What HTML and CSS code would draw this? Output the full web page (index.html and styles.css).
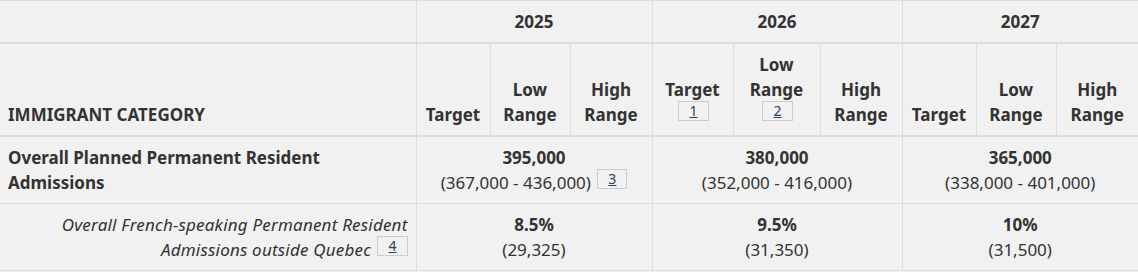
FILE: index.html
```html
<!DOCTYPE html>
<html lang="en">
<head>
<meta charset="utf-8">
<title>Immigration levels</title>
<link rel="stylesheet" href="styles.css">
</head>
<body>
<table class="levels">
  <colgroup>
    <col class="c-cat">
    <col class="c-a"><col class="c-b"><col class="c-c">
    <col class="c-d"><col class="c-e"><col class="c-f">
    <col class="c-a"><col class="c-b"><col class="c-c">
  </colgroup>
  <thead>
    <tr class="years">
      <th class="blank"></th>
      <th colspan="3">2025</th>
      <th colspan="3">2026</th>
      <th colspan="3">2027</th>
    </tr>
    <tr class="subs">
      <th class="cat">IMMIGRANT CATEGORY</th>
      <th>Target</th>
      <th>Low Range</th>
      <th>High Range</th>
      <th>Target<br><sup><a class="fn-lnk" href="#fn1">1</a></sup></th>
      <th>Low Range<br><sup><a class="fn-lnk" href="#fn2">2</a></sup></th>
      <th>High Range</th>
      <th>Target</th>
      <th>Low Range</th>
      <th>High Range</th>
    </tr>
  </thead>
  <tbody>
    <tr>
      <th class="row-main">Overall Planned Permanent Resident Admissions</th>
      <td colspan="3"><strong>395,000</strong><br>(367,000 - 436,000) <sup><a class="fn-lnk" href="#fn3">3</a></sup></td>
      <td colspan="3"><strong>380,000</strong><br>(352,000 - 416,000)</td>
      <td colspan="3"><strong>365,000</strong><br>(338,000 - 401,000)</td>
    </tr>
    <tr>
      <th class="row-sub"><span class="sub-text">Overall French-speaking Permanent Resident Admissions outside Quebec</span> <sup><a class="fn-lnk" href="#fn4">4</a></sup></th>
      <td colspan="3"><strong>8.5%</strong><br>(29,325)</td>
      <td colspan="3"><strong>9.5%</strong><br>(31,350)</td>
      <td colspan="3"><strong>10%</strong><br>(31,500)</td>
    </tr>
  </tbody>
</table>
</body>
</html>
```
FILE: styles.css
```css
html, body {
  margin: 0;
  padding: 0;
  background: #f1f1f1;
}
body {
  font-family: "Noto Sans", "Open Sans", sans-serif;
  font-size: 17px;
  line-height: 25px;
  color: #333;
}
.levels {
  width: 1138px;
  table-layout: fixed;
  border-collapse: collapse;
  background: #f1f1f1;
}
.c-cat { width: 416px; }
.c-a { width: 74px; }
.c-b { width: 80px; }
.c-c { width: 82px; }
.c-d { width: 81px; }
.c-e { width: 87px; }
.c-f { width: 82px; }
.levels th,
.levels td {
  border: 1px solid #ddd;
  padding: 8px;
}
.levels tr > :first-child { border-left: none; }
.levels tr > :last-child { border-right: none; }
.levels thead th {
  font-weight: 700;
  text-align: center;
  vertical-align: bottom;
  padding-left: 4px;
  padding-right: 4px;
}
.levels .years th { border-bottom: 2px solid #ddd; }
.levels .subs th { border-bottom: 2px solid #ddd; }
.levels thead th.cat {
  text-align: left;
  padding-left: 8px;
}
.levels tbody th,
.levels tbody td {
  vertical-align: top;
}
.levels tbody td { text-align: center; }
.row-main {
  text-align: left;
  font-weight: 700;
  padding-right: 60px;
}
.row-sub {
  text-align: right;
  font-style: italic;
  font-weight: 400;
  padding-left: 40px;
}
.sub-text {
  letter-spacing: 0.2px;
}
sup {
  font-size: 14px;
  line-height: 0;
  vertical-align: 3px;
}
.fn-lnk {
  display: inline-block;
  border: 1px solid #ccc;
  padding: 0 10px;
  line-height: 18px;
  color: #284162;
  font-weight: 400;
  font-style: normal;
  margin-left: 2px;
  transform: translateY(-2px);
}
```
